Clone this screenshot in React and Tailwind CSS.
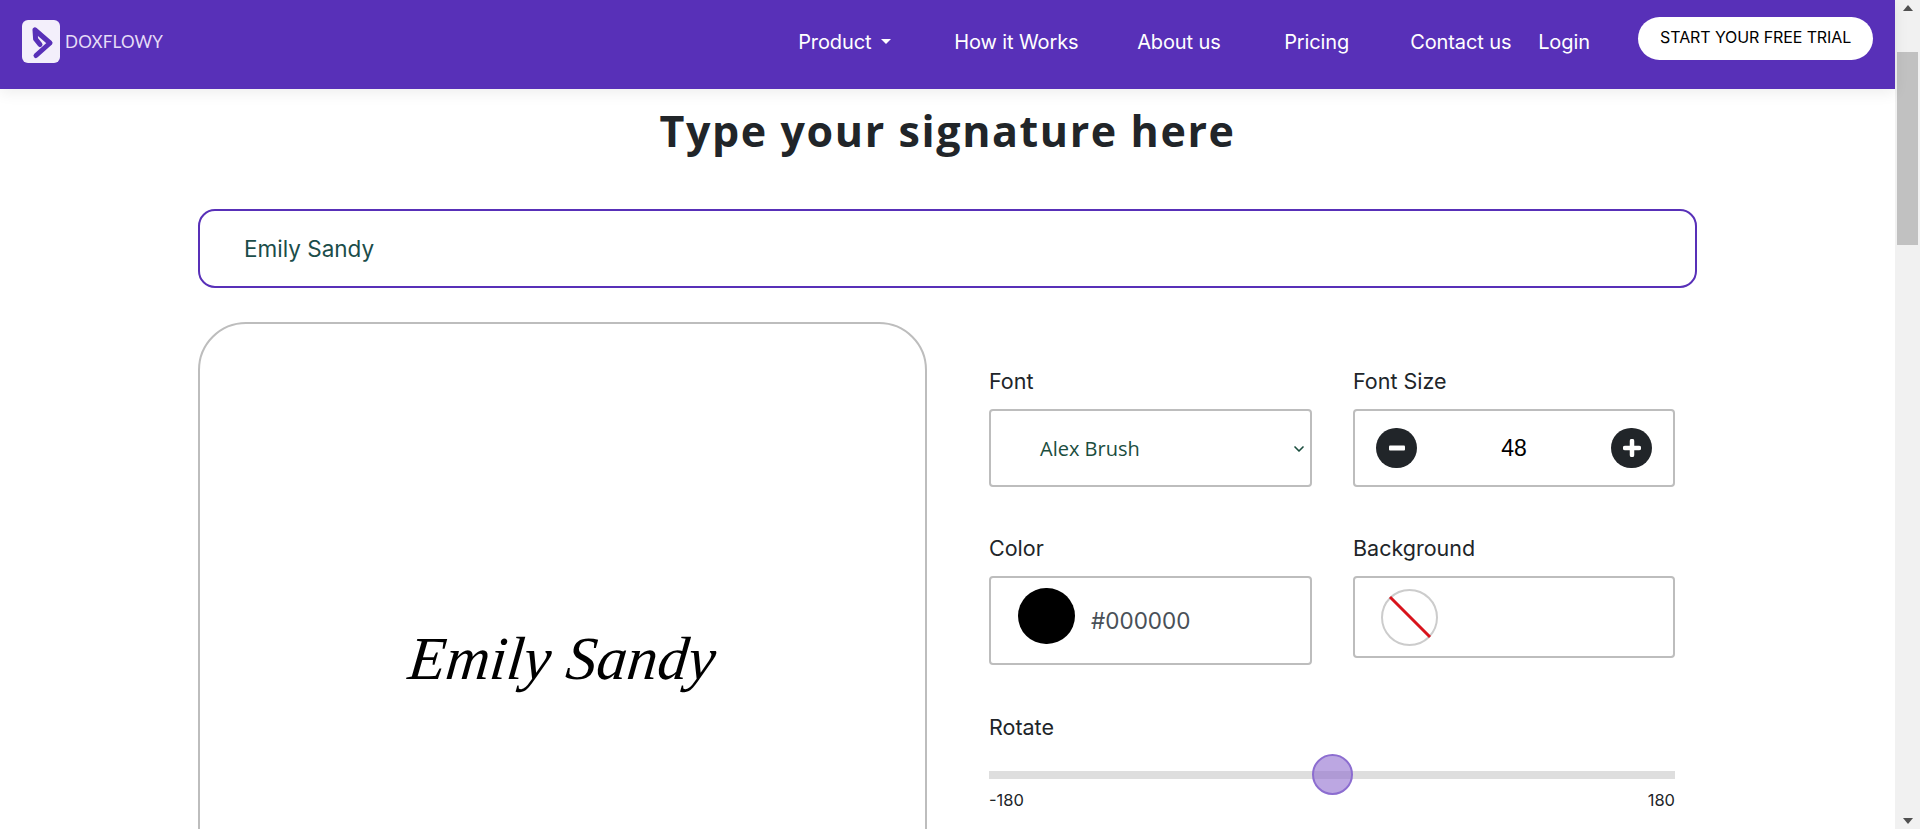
import React from 'react';
import { ChevronDown } from 'lucide-react';

const sans = "font-['Inter','Noto_Sans',sans-serif]";

const navLinks = [
  { label: 'How it Works', width: 'w-[183px]' },
  { label: 'About us', width: 'w-[147px]' },
  { label: 'Pricing', width: 'w-[126px]' },
  { label: 'Contact us', width: 'w-[128px]' },
  { label: 'Login', width: 'w-[100px]' },
];

function Logo() {
  return (
    <div className="flex h-[43px] w-[38px] items-center justify-center rounded-md bg-[#f3effb]">
      <svg width="38" height="43" viewBox="0 0 38 43" fill="none">
        <path
          d="M13 10 L13.6 19 L18 24.5 M13 10 L28 23 L14 35.5"
          stroke="#5830b8"
          strokeWidth="5"
          strokeLinecap="round"
          strokeLinejoin="round"
        />
      </svg>
    </div>
  );
}

function Header() {
  return (
    <header className="relative z-10 flex h-[89px] items-center bg-[#5830b8] pb-[6px] pl-[22px] shadow-[0_4px_14px_rgba(0,0,0,0.07)]">
      <Logo />
      <span className="ml-[5px] font-['Lato',sans-serif] text-[17px] tracking-[0.2px] text-[#e6dcf7]">
        DOXFLOWY
      </span>
      <nav className="ml-[635px] flex items-center text-[20px] tracking-[-0.1px] text-white">
        <div className="flex w-[156px] items-center">
          Product
          <span className="ml-[10px] h-0 w-0 border-x-[5px] border-t-[5px] border-x-transparent border-t-white" />
        </div>
        {navLinks.map(link => (
          <a key={link.label} className={link.width}>
            {link.label}
          </a>
        ))}
      </nav>
      <button className="mb-[6px] flex h-[43px] w-[235px] items-center justify-center rounded-[22px] bg-white pb-[3px] text-[16px] tracking-[-0.1px] text-black">
        START YOUR FREE TRIAL
      </button>
    </header>
  );
}

function Field({ label, className, children }) {
  return (
    <div className={className}>
      <div className="mb-[13px] text-[21.5px] leading-[30px] text-[#212529]">{label}</div>
      {children}
    </div>
  );
}

function RoundButton({ children }) {
  return (
    <button className="flex h-[40px] w-[41px] items-center justify-center rounded-full bg-[#212529] text-white">
      {children}
    </button>
  );
}

function Controls() {
  return (
    <div className="ml-[62px] w-[686px] pt-[44px]">
      <div className="flex gap-[41px]">
        <Field label="Font" className="w-[323px]">
          <div className="flex h-[78px] items-center rounded border-2 border-[#bdbdbd] pl-[49px] pr-[3px] pt-[2px] font-['Open_Sans',sans-serif] text-[20px] text-[#1b4d3e]">
            Alex Brush
            <ChevronDown className="ml-auto" size={16} strokeWidth={2.5} />
          </div>
        </Field>
        <Field label="Font Size" className="w-[322px]">
          <div className="flex h-[78px] items-center justify-between rounded border-2 border-[#bdbdbd] px-[21px]">
            <RoundButton>
              <svg width="18" height="18" viewBox="0 0 18 18">
                <rect x="1" y="6.5" width="16" height="5" rx="1" fill="white" />
              </svg>
            </RoundButton>
            <span className="font-['Liberation_Sans',sans-serif] text-[23px] text-black">48</span>
            <RoundButton>
              <svg width="18" height="18" viewBox="0 0 18 18">
                <path d="M9 2 V16 M2 9 H16" stroke="white" strokeWidth="4.5" strokeLinecap="round" />
              </svg>
            </RoundButton>
          </div>
        </Field>
      </div>
      <div className="mt-[46px] flex items-start gap-[41px]">
        <Field label="Color" className="w-[323px]">
          <div className="flex h-[89px] items-center rounded border-2 border-[#bdbdbd] pl-[27px]">
            <div className="mb-[9px] h-[56px] w-[57px] rounded-full bg-black" />
            <span className="ml-[16px] text-[22.5px] text-[#495057]">#000000</span>
          </div>
        </Field>
        <Field label="Background" className="w-[322px]">
          <div className="flex h-[82px] items-center rounded border-2 border-[#bdbdbd] pl-[26px]">
            <div className="h-[57px] w-[57px] rounded-full border-2 border-[#cccccc] bg-white">
              <svg width="53" height="53" viewBox="0 0 53 53">
                <path d="M7 6 L47 46" stroke="#d8131c" strokeWidth="3" />
              </svg>
            </div>
          </div>
        </Field>
      </div>
      <div className="mt-[47px] w-[686px]">
        <div className="text-[21.5px] leading-[30px] text-[#212529]">Rotate</div>
        <div className="relative mt-[29px] h-[8px] bg-[#dedede]">
          <div className="absolute left-[323px] top-[-17px] h-[41px] w-[41px] rounded-full border-2 border-[#8c6dd0] bg-[#8f6ccf]/60" />
        </div>
        <div className="mt-[9px] flex justify-between text-[16.5px] text-[#212529]">
          <span>-180</span>
          <span>180</span>
        </div>
      </div>
    </div>
  );
}

function Scrollbar() {
  return (
    <div className="flex h-full w-[25px] shrink-0 flex-col items-center justify-between bg-[#f1f1f1] pb-[5px] pt-[5px]">
      <span className="h-0 w-0 border-x-[5px] border-b-[6px] border-x-transparent border-b-[#505050]" />
      <div className="absolute right-[2px] top-[52px] h-[193px] w-[21px] bg-[#c1c1c1]" />
      <span className="h-0 w-0 border-x-[5px] border-t-[6px] border-x-transparent border-t-[#505050]" />
    </div>
  );
}

export default function App() {
  return (
    <div className={`relative flex h-[829px] w-[1920px] overflow-hidden bg-white ${sans}`}>
      <div className="w-[1895px] shrink-0">
        <Header />
        <main className="pl-[198px]">
          <h1 className="mt-[14px] w-[1499px] text-center font-['Open_Sans',sans-serif] text-[43px] font-bold leading-[56px] tracking-[1.6px] text-[#212529]">
            Type your signature here
          </h1>
          <div className="mt-[50px] flex h-[79px] w-[1499px] items-center rounded-[17px] border-2 border-[#5830b8] pl-[44px] text-[22.5px] text-[#1b4d4a]">
            Emily Sandy
          </div>
          <div className="mt-[34px] flex">
            <div className="flex h-[674px] w-[729px] shrink-0 items-center justify-center rounded-[48px] border-2 border-[#bdbdbd]">
              <span className="inline-block -skew-x-6 font-['Liberation_Serif',serif] text-[61px] italic text-black">
                Emily Sandy
              </span>
            </div>
            <Controls />
          </div>
        </main>
      </div>
      <Scrollbar />
    </div>
  );
}
